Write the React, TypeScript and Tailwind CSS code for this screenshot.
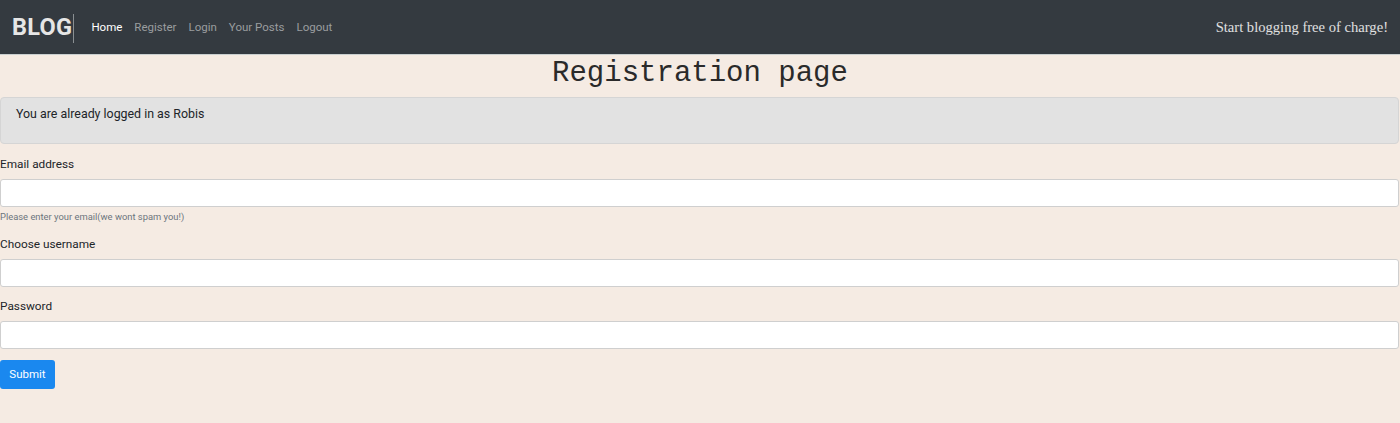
const navLinks = ["Register", "Login", "Your Posts", "Logout"];

const Field = ({ label, type = "text", help }: { label: string; type?: string; help?: string }) => (
  <div className="mb-[11px]">
    <label className="block text-[11.8px] leading-[16px] text-[#212529] mb-[7px]">{label}</label>
    <input
      type={type}
      className="block w-full h-[28px] bg-white border border-[#cfcfcf] rounded-[3px] px-2 text-[13px] outline-none"
    />
    {help && <p className="text-[9.4px] leading-[12px] text-[#6c757d] mt-[4px] pb-[2px]">{help}</p>}
  </div>
);

export default function App() {
  return (
    <div className="min-h-[423px] bg-[#f5ebe3] font-['Roboto','Liberation_Sans',sans-serif]">
      {/* Navbar */}
      <nav className="h-[55px] bg-[#343a40] border-b border-[#c9cfd0] flex items-center px-[12px] pt-[2px]">
        <span className="text-[23.5px] font-bold text-[#e6e6e6] leading-none tracking-[0.3px]">BLOG</span>
        <span className="w-px h-[29px] bg-[#8a8f92] ml-[1px]"></span>
        <div className="flex items-center ml-[17px] gap-[12px] text-[11.5px]">
          <span className="text-white">Home</span>
          {navLinks.map((l) => (
            <span key={l} className="text-[#9a9d9f]">
              {l}
            </span>
          ))}
        </div>
        <span className="ml-auto text-[14.6px] text-[#e0e0e0] font-['Liberation_Serif',serif]">
          Start blogging free of charge!
        </span>
      </nav>

      {/* Title */}
      <h1 className="text-center text-[29px] leading-[34px] text-[#2a2a2a] font-['Liberation_Mono',monospace] mt-[2px] mb-[6px]">
        Registration page
      </h1>

      {/* Alert */}
      <div className="mr-[1px] h-[47px] bg-[#e2e2e2] border border-[#d5d5d5] rounded-[4px] px-[15px] pt-[7px] text-[12.4px] text-[#212529] mb-[12px]">
        You are already logged in as Robis
      </div>

      {/* Form */}
      <form className="mr-[1px]">
        <Field label="Email address" type="email" help="Please enter your email(we wont spam you!)" />
        <Field label="Choose username" />
        <Field label="Password" type="password" />
        <button
          type="button"
          className="h-[29px] w-[55px] bg-[#1a88ef] text-white text-[11.5px] rounded-[3px]"
        >
          Submit
        </button>
      </form>
    </div>
  );
}
